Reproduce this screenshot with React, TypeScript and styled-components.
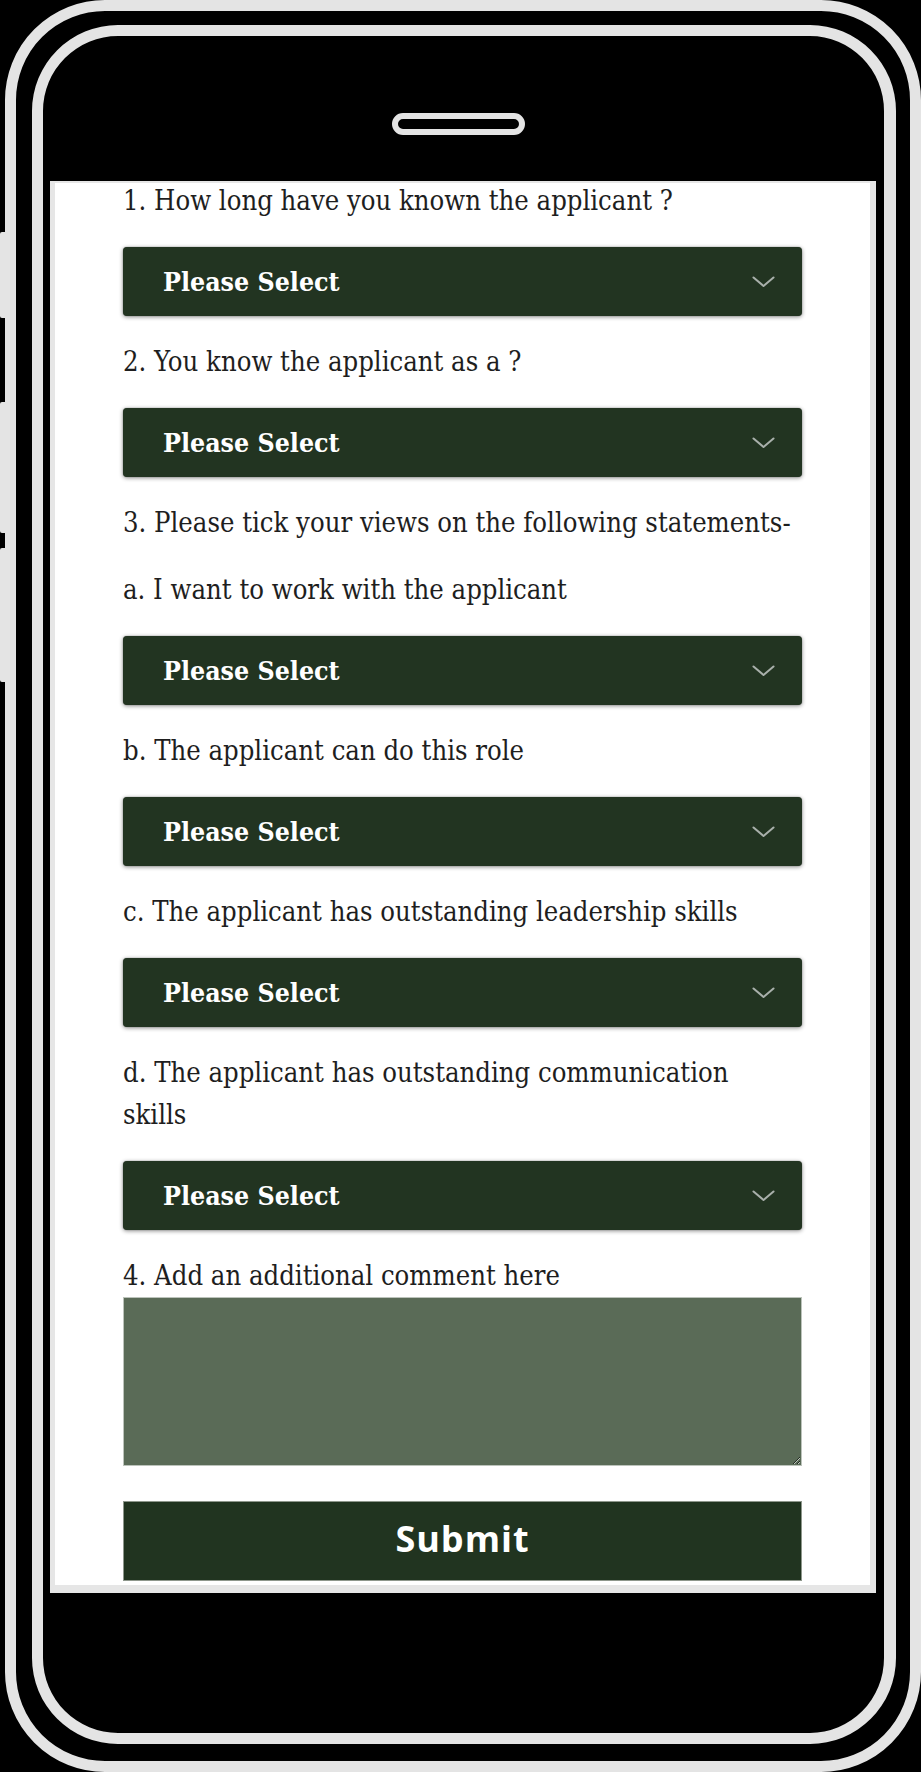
import React from "react";
import styled, { createGlobalStyle } from "styled-components";

const GlobalStyle = createGlobalStyle`
  html, body {
    margin: 0;
    padding: 0;
    background: #000;
  }
  body {
    width: 921px;
    height: 1772px;
    overflow: hidden;
  }
  * { box-sizing: border-box; }
`;

const RING = "#e4e4e4";

const Page = styled.div`
  display: flex;
  width: 921px;
  height: 1772px;
  background: #000;
`;

const SideButtons = styled.div`
  display: flex;
  flex-direction: column;
  width: 5px;
  flex: none;
  padding-top: 232px;
`;

const SideButton = styled.div<{ $h: number; $gap: number }>`
  height: ${(p) => p.$h}px;
  margin-top: ${(p) => p.$gap}px;
  background: ${RING};
  border-radius: 2px 0 0 2px;
`;

const PhoneOuter = styled.div`
  width: 916px;
  height: 1772px;
  flex: none;
  display: flex;
  border: 11px solid ${RING};
  border-radius: 100px;
  padding: 14px 14px 17px 16px;
`;

const PhoneInner = styled.div`
  flex: 1;
  display: flex;
  flex-direction: column;
  border: 11px solid ${RING};
  border-right-width: 12px;
  border-radius: 86px;
  padding: 0 8px 0 7px;
`;

const TopBar = styled.div`
  height: 145px;
  flex: none;
  display: flex;
  align-items: flex-start;
  padding: 77px 0 0 342px;
`;

const Speaker = styled.div`
  width: 133px;
  height: 22px;
  border: 6px solid ${RING};
  border-radius: 11px;
  background: #000;
`;

const Screen = styled.div`
  height: 1412px;
  flex: none;
  background: #fff;
  border-style: solid;
  border-color: #e6e6e6;
  border-width: 2px 6px 8px 5px;
  padding: 0 68px;
  overflow: hidden;
`;

const BottomBar = styled.div`
  flex: 1;
`;

const Form = styled.form`
  display: flex;
  flex-direction: column;
  gap: 25px;
  margin-top: -3px;
`;

const Label = styled.p<{ $wrap?: boolean }>`
  margin: 0;
  max-width: ${(p) => (p.$wrap ? "640px" : "none")};
  font-family: "DejaVu Serif", Georgia, serif;
  font-stretch: condensed;
  font-size: 27.2px;
  line-height: 42px;
  color: #1e1e1e;
  white-space: ${(p) => (p.$wrap ? "normal" : "nowrap")};
`;

const SelectBox = styled.button`
  display: flex;
  align-items: center;
  justify-content: space-between;
  width: 100%;
  height: 69px;
  padding: 0 27px 0 40px;
  border: none;
  border-radius: 4px;
  background: #223421;
  box-shadow: 0 1px 4px rgba(0, 0, 0, 0.45), 0 0 1px rgba(0, 0, 0, 0.5);
  color: #fff;
  font-family: "DejaVu Serif", Georgia, serif;
  font-stretch: condensed;
  font-weight: 700;
  font-size: 26.5px;
  text-align: left;
  cursor: pointer;
`;

const CommentGroup = styled.div`
  display: flex;
  flex-direction: column;
`;

const CommentArea = styled.textarea`
  display: block;
  width: 100%;
  height: 169px;
  margin: 0;
  background: #5a6b57;
  border: 1px solid #bcc3bb;
  border-radius: 0;
  resize: vertical;
  color: #fff;
  font-family: "DejaVu Serif", Georgia, serif;
  font-size: 20px;
`;

const SubmitButton = styled.button`
  margin-top: 10px;
  width: 100%;
  height: 80px;
  padding: 0 0 5px;
  background: #213420;
  border: 1px solid #8e978c;
  color: #fff;
  font-family: "Open Sans", "Liberation Sans", sans-serif;
  font-weight: 700;
  font-size: 36px;
  letter-spacing: 1px;
  cursor: pointer;
`;

const Chevron = () => (
  <svg width="23" height="12" viewBox="0 0 23 12" aria-hidden="true">
    <polyline
      points="1.5,1.5 11.5,10 21.5,1.5"
      fill="none"
      stroke="#a9b0ab"
      strokeWidth="2"
      strokeLinecap="round"
      strokeLinejoin="round"
    />
  </svg>
);

const Select = () => (
  <SelectBox type="button">
    <span>Please Select</span>
    <Chevron />
  </SelectBox>
);

type Question = { label: string; wrap?: boolean; select: boolean };

const questions: Question[] = [
  { label: "1. How long have you known the applicant ?", select: true },
  { label: "2. You know the applicant as a ?", select: true },
  { label: "3. Please tick your views on the following statements-", select: false },
  { label: "a. I want to work with the applicant", select: true },
  { label: "b. The applicant can do this role", select: true },
  { label: "c. The applicant has outstanding leadership skills", select: true },
  {
    label: "d. The applicant has outstanding communication skills",
    wrap: true,
    select: true,
  },
];

export default function App() {
  return (
    <>
      <GlobalStyle />
      <Page>
        <SideButtons>
          <SideButton $h={86} $gap={0} />
          <SideButton $h={131} $gap={84} />
          <SideButton $h={134} $gap={15} />
        </SideButtons>
        <PhoneOuter>
          <PhoneInner>
            <TopBar>
              <Speaker />
            </TopBar>
            <Screen>
              <Form onSubmit={(e) => e.preventDefault()}>
                {questions.map((q) => (
                  <React.Fragment key={q.label}>
                    <Label $wrap={q.wrap}>{q.label}</Label>
                    {q.select && <Select />}
                  </React.Fragment>
                ))}
                <CommentGroup>
                  <Label>4. Add an additional comment here</Label>
                  <CommentArea />
                </CommentGroup>
                <SubmitButton type="submit">Submit</SubmitButton>
              </Form>
            </Screen>
            <BottomBar />
          </PhoneInner>
        </PhoneOuter>
      </Page>
    </>
  );
}
